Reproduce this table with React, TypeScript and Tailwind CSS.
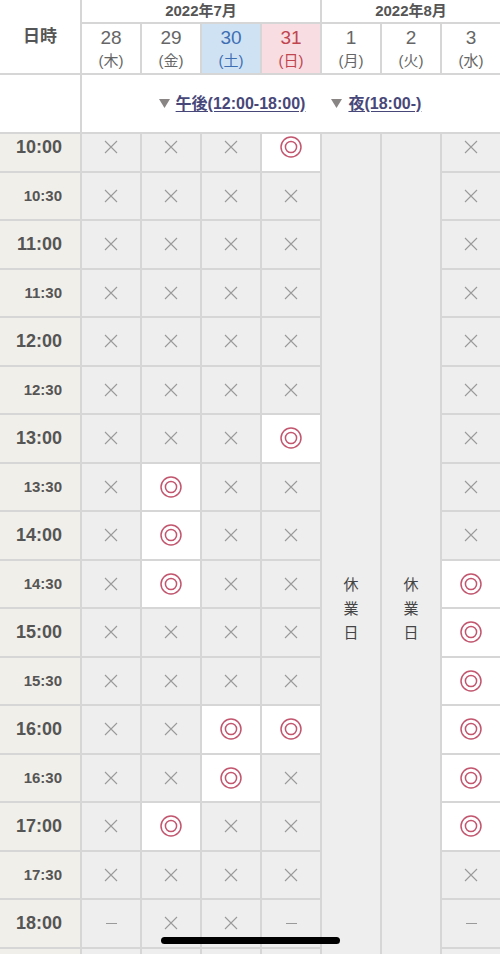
import React from "react"

type Mark = "x" | "o" | "-"

const font = { fontFamily: '"Liberation Sans", "Noto Sans CJK JP", sans-serif' }

const times = [
  "10:00", "10:30", "11:00", "11:30", "12:00", "12:30", "13:00", "13:30", "14:00",
  "14:30", "15:00", "15:30", "16:00", "16:30", "17:00", "17:30", "18:00", "",
]

// columns: 28, 29, 30, 31, 3 (1 and 2 are closed)
const grid: Mark[][] = [
  ["x", "x", "x", "o", "x"],
  ["x", "x", "x", "x", "x"],
  ["x", "x", "x", "x", "x"],
  ["x", "x", "x", "x", "x"],
  ["x", "x", "x", "x", "x"],
  ["x", "x", "x", "x", "x"],
  ["x", "x", "x", "o", "x"],
  ["x", "o", "x", "x", "x"],
  ["x", "o", "x", "x", "x"],
  ["x", "o", "x", "x", "o"],
  ["x", "x", "x", "x", "o"],
  ["x", "x", "x", "x", "o"],
  ["x", "x", "o", "o", "o"],
  ["x", "x", "o", "x", "o"],
  ["x", "o", "x", "x", "o"],
  ["x", "x", "x", "x", "x"],
  ["-", "x", "x", "-", "-"],
  ["x", "x", "x", "x", "-"],
]

function Cross() {
  return (
    <svg width="14" height="14" viewBox="0 0 14 14">
      <path d="M1 1 L13 13 M13 1 L1 13" stroke="#9a9a9a" strokeWidth="1.1" fill="none" />
    </svg>
  )
}

function DoubleCircle() {
  return (
    <svg width="24" height="24" viewBox="0 0 24 24">
      <circle cx="12" cy="12" r="10" stroke="#c2566f" strokeWidth="1.5" fill="none" />
      <circle cx="12" cy="12" r="5.6" stroke="#c2566f" strokeWidth="1.5" fill="none" />
    </svg>
  )
}

function Triangle() {
  return (
    <svg width="11" height="9" viewBox="0 0 11 9">
      <path d="M0 0 H11 L5.5 9 Z" fill="#8a8585" />
    </svg>
  )
}

function Cell({ mark }: { mark: Mark }) {
  return (
    <div
      className={`h-[46.5px] flex items-center justify-center ${mark === "o" ? "bg-white" : "bg-[#eeeeee]"}`}
    >
      {mark === "x" && <Cross />}
      {mark === "o" && <DoubleCircle />}
      {mark === "-" && <div className="w-[11px] h-[1.5px] bg-[#9a9a9a]" />}
    </div>
  )
}

const days = [
  { d: "28", w: "(木)", tone: "" },
  { d: "29", w: "(金)", tone: "" },
  { d: "30", w: "(土)", tone: "sat" },
  { d: "31", w: "(日)", tone: "sun" },
  { d: "1", w: "(月)", tone: "" },
  { d: "2", w: "(火)", tone: "" },
  { d: "3", w: "(水)", tone: "" },
]

function Header() {
  return (
    <div className="grid grid-cols-[80px_repeat(7,1fr)] grid-rows-[22px_49px_57px] gap-[2px] bg-[#d6d6d6] pb-[2px] shrink-0">
      <div className="row-span-2 bg-white flex items-center justify-center text-[17px] font-bold text-[#555]">
        日時
      </div>
      <div className="col-span-4 bg-white flex items-center justify-center text-[15px] font-bold text-[#555]">
        2022年7月
      </div>
      <div className="col-span-3 bg-white flex items-center justify-center text-[15px] font-bold text-[#555]">
        2022年8月
      </div>
      {days.map((day) => (
        <div
          key={day.d}
          className={`flex flex-col items-center justify-center pt-[1px] ${
            day.tone === "sat"
              ? "bg-[#cfe2f3] text-[#3f6fb3]"
              : day.tone === "sun"
              ? "bg-[#f8dde3] text-[#c0454f]"
              : "bg-white text-[#666]"
          }`}
        >
          <span className="text-[19px] leading-[23px]">{day.d}</span>
          <span className="text-[15px] leading-[23px]">{day.w}</span>
        </div>
      ))}
      <div className="bg-white" />
      <div className="col-span-7 bg-white flex items-center justify-center gap-[26px] pr-[2px] text-[16px] font-bold text-[#474779]">
        <span className="flex items-center gap-[6px]">
          <Triangle />
          <span className="underline underline-offset-2">午後(12:00-18:00)</span>
        </span>
        <span className="flex items-center gap-[6px]">
          <Triangle />
          <span className="underline underline-offset-2">夜(18:00-)</span>
        </span>
      </div>
    </div>
  )
}

function ClosedColumn() {
  return (
    <div className="bg-[#eeeeee] flex flex-col items-center pt-[449px] text-[15px] leading-[24px] text-[#444]">
      <span>休</span>
      <span>業</span>
      <span>日</span>
    </div>
  )
}

export default function App() {
  return (
    <div className="relative w-[500px] h-[954px] overflow-hidden bg-white flex flex-col" style={font}>
      <Header />
      <div className="flex-1 overflow-hidden">
        <div className="-mt-[10px] grid grid-cols-[80px_repeat(7,1fr)] gap-x-[2px] bg-[#d6d6d6]">
          <div className="flex flex-col gap-[2px]">
            {times.map((t, i) => (
              <div
                key={i}
                className={`h-[46.5px] bg-[#f1efea] flex items-center justify-end pr-[18px] font-bold text-[#555] ${
                  t.endsWith(":00") ? "text-[18px]" : "text-[15px]"
                }`}
              >
                {t}
              </div>
            ))}
          </div>
          {[0, 1, 2, 3].map((c) => (
            <div key={c} className="flex flex-col gap-[2px]">
              {grid.map((row, r) => (
                <Cell key={r} mark={row[c]} />
              ))}
            </div>
          ))}
          <ClosedColumn />
          <ClosedColumn />
          <div className="flex flex-col gap-[2px]">
            {grid.map((row, r) => (
              <Cell key={r} mark={row[4]} />
            ))}
          </div>
        </div>
      </div>
      <div className="absolute left-[161px] bottom-[10px] w-[179px] h-[7px] rounded-full bg-black" />
    </div>
  )
}
